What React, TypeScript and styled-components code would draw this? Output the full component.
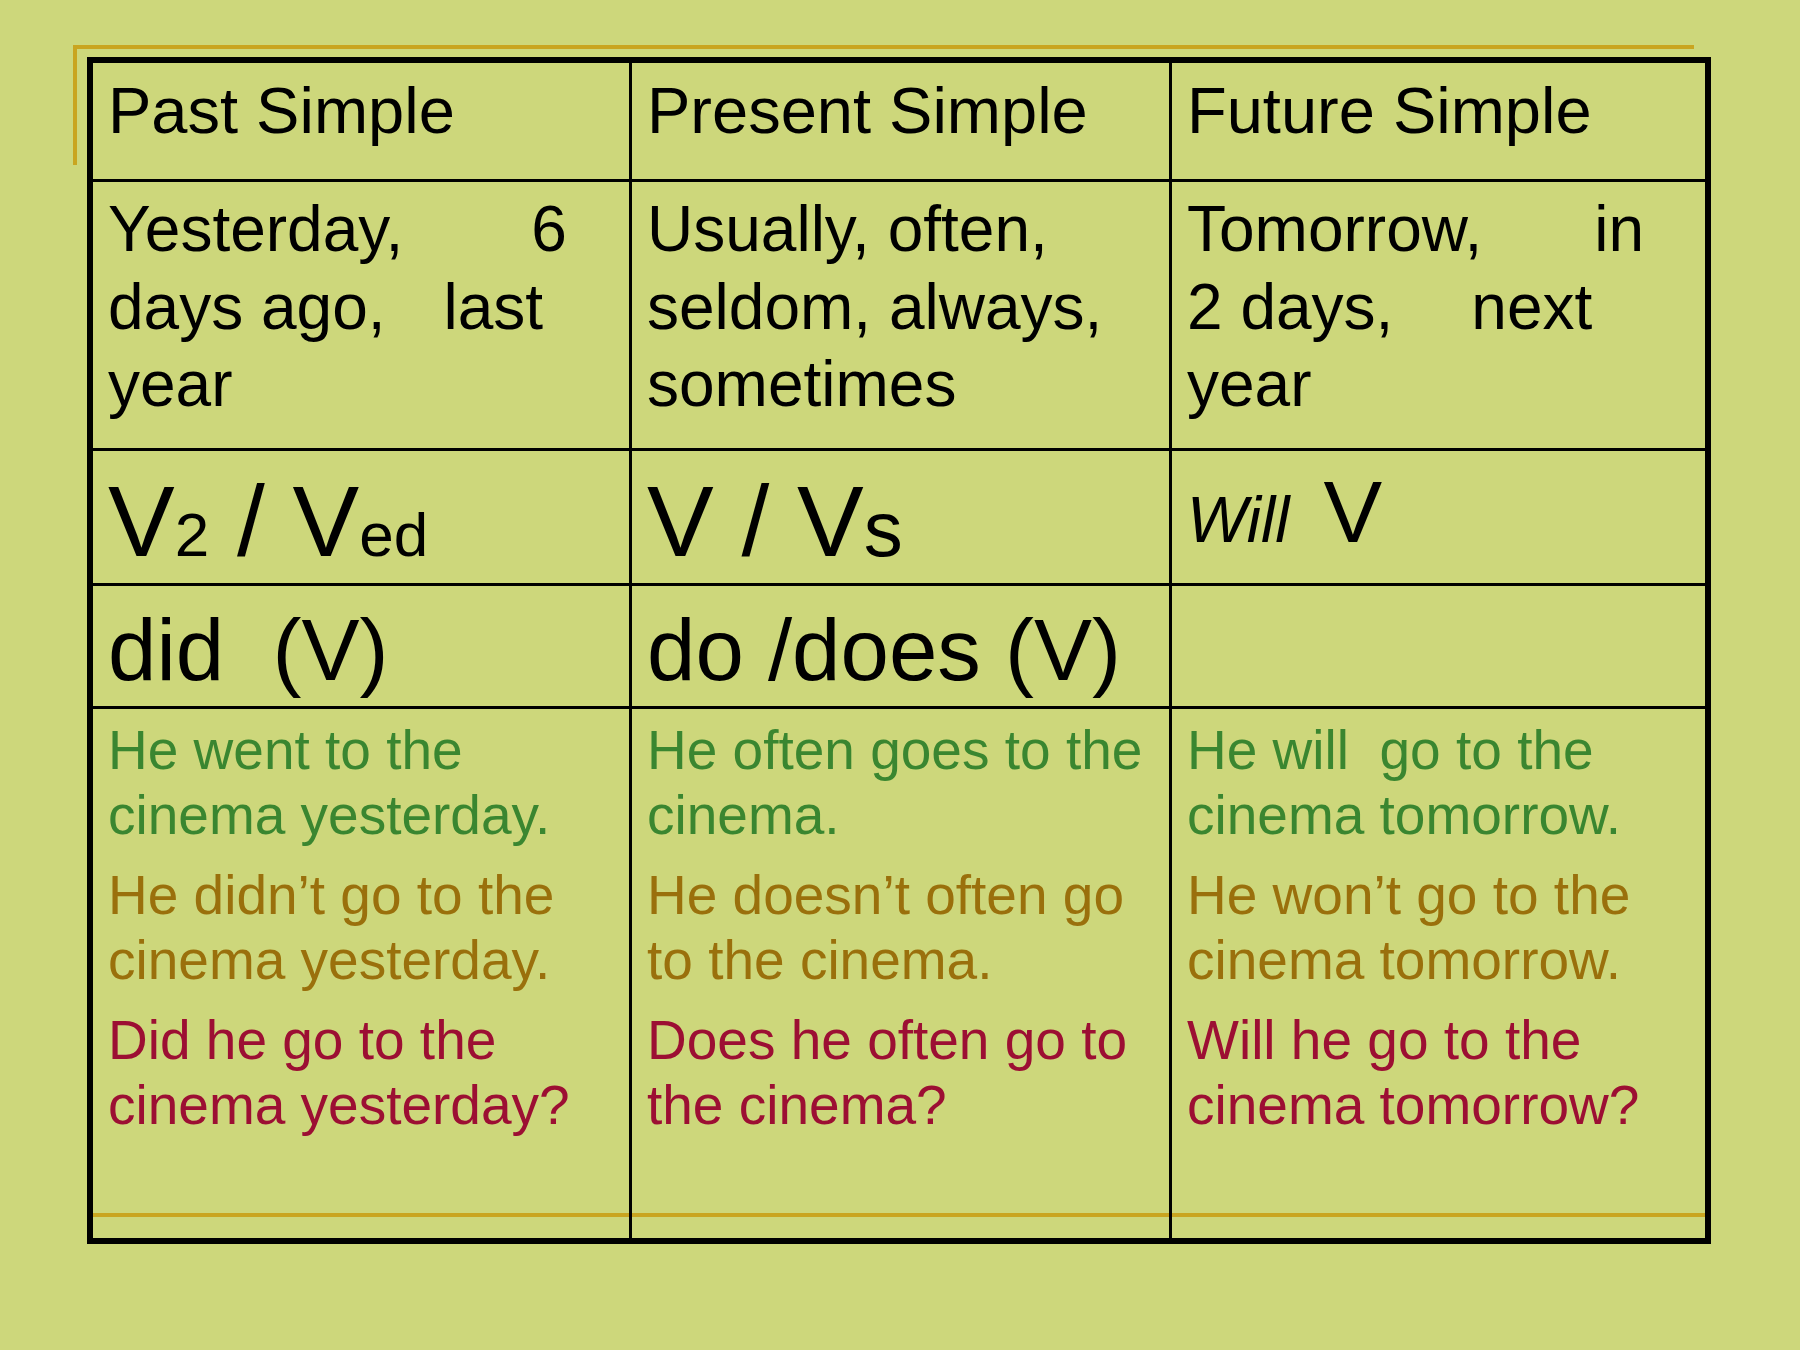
import * as React from "react";
import styled, { createGlobalStyle } from "styled-components";

type Tone = "affirm" | "negative" | "question";

interface Iexample {
  tone: Tone;
  lines: string[];
}

const tones: Record<Tone, string> = {
  affirm: "#3a8630",
  negative: "#9a700c",
  question: "#9c0f33",
};

const past: Iexample[] = [
  { tone: "affirm", lines: ["He went to the", "cinema yesterday."] },
  { tone: "negative", lines: ["He didn’t go to the", "cinema yesterday."] },
  { tone: "question", lines: ["Did he go to the", "cinema yesterday?"] },
];

const present: Iexample[] = [
  { tone: "affirm", lines: ["He often goes to the", "cinema."] },
  { tone: "negative", lines: ["He doesn’t often go", "to the cinema."] },
  { tone: "question", lines: ["Does he often go to", "the cinema?"] },
];

const future: Iexample[] = [
  { tone: "affirm", lines: ["He will  go to the", "cinema tomorrow."] },
  { tone: "negative", lines: ["He won’t go to the", "cinema tomorrow."] },
  { tone: "question", lines: ["Will he go to the", "cinema tomorrow?"] },
];

const renderExamples = (list: Iexample[]) => (
  <Examples>
    {list.map((item) => (
      <Example key={item.tone} $tone={item.tone}>
        {item.lines.map((line) => (
          <div key={line}>{line}</div>
        ))}
      </Example>
    ))}
  </Examples>
);

const App = (): JSX.Element => {
  return (
    <>
      <GlobalStyle />
      <Slide>
        <Frame>
          <Table>
            {/* заголовки */}
            <Cell $pt={10}>
              <Head>Past Simple</Head>
            </Cell>
            <Cell $pt={10}>
              <Head>Present Simple</Head>
            </Cell>
            <Cell $pt={10}>
              <Head>Future Simple</Head>
            </Cell>

            {/* маркеры времени */}
            <Cell $pt={9}>
              <Words>
                <Line>
                  Yesterday,<Spacer $w={128} />6
                </Line>
                <Line>
                  days ago,<Spacer $w={58} />last
                </Line>
                <Line>year</Line>
              </Words>
            </Cell>
            <Cell $pt={9}>
              <Words>
                <Line>Usually, often,</Line>
                <Line>seldom, always,</Line>
                <Line>sometimes</Line>
              </Words>
            </Cell>
            <Cell $pt={9}>
              <Words>
                <Line>
                  Tomorrow,<Spacer $w={112} />in
                </Line>
                <Line>
                  2 days,<Spacer $w={78} />next
                </Line>
                <Line>year</Line>
              </Words>
            </Cell>

            {/* формы глагола */}
            <Cell $pt={20}>
              <Form>
                V<Small $size={62}>2</Small> / V<Small $size={62}>ed</Small>
              </Form>
            </Cell>
            <Cell $pt={20}>
              <Form>
                V / V<Small $size={78}>s</Small>
              </Form>
            </Cell>
            <Cell $pt={11}>
              <Form $size={88}>
                <Modal>Will</Modal>
                <Verb>V</Verb>
              </Form>
            </Cell>

            {/* вспомогательные глаголы */}
            <Cell $pt={14}>
              <Aux>did  (V)</Aux>
            </Cell>
            <Cell $pt={14}>
              <Aux>do /does (V)</Aux>
            </Cell>
            <Cell $pt={14} />

            {/* примеры */}
            <Cell $pt={9}>{renderExamples(past)}</Cell>
            <Cell $pt={9}>{renderExamples(present)}</Cell>
            <Cell $pt={9}>{renderExamples(future)}</Cell>
          </Table>
        </Frame>
      </Slide>
    </>
  );
};

export default App;

const GlobalStyle = createGlobalStyle`
  html, body {
    margin: 0;
    padding: 0;
    background: #cdd77b;
  }

  body {
    font-family: "Liberation Sans", Arial, sans-serif;
    color: #000;
  }
`;

const Slide = styled.div`
  box-sizing: border-box;
  width: 1800px;
  height: 1350px;
  padding: 45px 0 0 73px;

  overflow: hidden;
  background: #cdd77b;
`;

const Frame = styled.div`
  position: relative;
  box-sizing: border-box;
  width: 1621px;
  padding: 8px 0 0 14px;

  border-top: 4px solid #c9a520;

  &::before {
    content: "";
    position: absolute;
    left: 0;
    top: 0;
    width: 4px;
    height: 116px;
    background: #c9a520;
  }
`;

const Table = styled.div`
  position: relative;
  box-sizing: border-box;
  display: grid;
  grid-template-columns: 539px 540px 533px;
  grid-template-rows: 119px 269px 135px 123px 529px;
  width: 1624px;

  border: 6px solid #000;

  &::before {
    content: "";
    position: absolute;
    left: 0;
    right: 0;
    top: 1150px;
    height: 4px;
    background: #c9a520;
  }
`;

const Cell = styled.div<{ $pt: number }>`
  position: relative;
  z-index: 1;
  box-sizing: border-box;
  padding: ${(p) => p.$pt}px 0 0 15px;

  border-right: 3px solid #000;
  border-bottom: 3px solid #000;

  &:nth-child(3n) {
    border-right: none;
  }

  &:nth-child(n + 13) {
    border-bottom: none;
  }
`;

const Head = styled.div`
  font-size: 65px;
  line-height: 75px;
  white-space: nowrap;
`;

const Words = styled.div`
  font-size: 64px;
  line-height: 77.5px;
`;

const Line = styled.div`
  display: flex;
  white-space: pre;
`;

const Spacer = styled.span<{ $w: number }>`
  display: inline-block;
  width: ${(p) => p.$w}px;
`;

const Form = styled.div<{ $size?: number }>`
  font-size: ${(p) => p.$size ?? 100}px;
  line-height: 100px;
  white-space: pre;
`;

const Small = styled.span<{ $size: number }>`
  font-size: ${(p) => p.$size}px;
`;

const Modal = styled.span`
  font-size: 64px;
  font-style: italic;
`;

const Verb = styled.span`
  margin-left: 34px;
`;

const Aux = styled.div`
  font-size: 87px;
  line-height: 100px;
  white-space: pre;
`;

const Examples = styled.div`
  display: flex;
  flex-direction: column;
  gap: 15px;
`;

const Example = styled.div<{ $tone: Tone }>`
  font-size: 55px;
  line-height: 65px;
  white-space: pre;
  color: ${(p) => tones[p.$tone]};
`;
